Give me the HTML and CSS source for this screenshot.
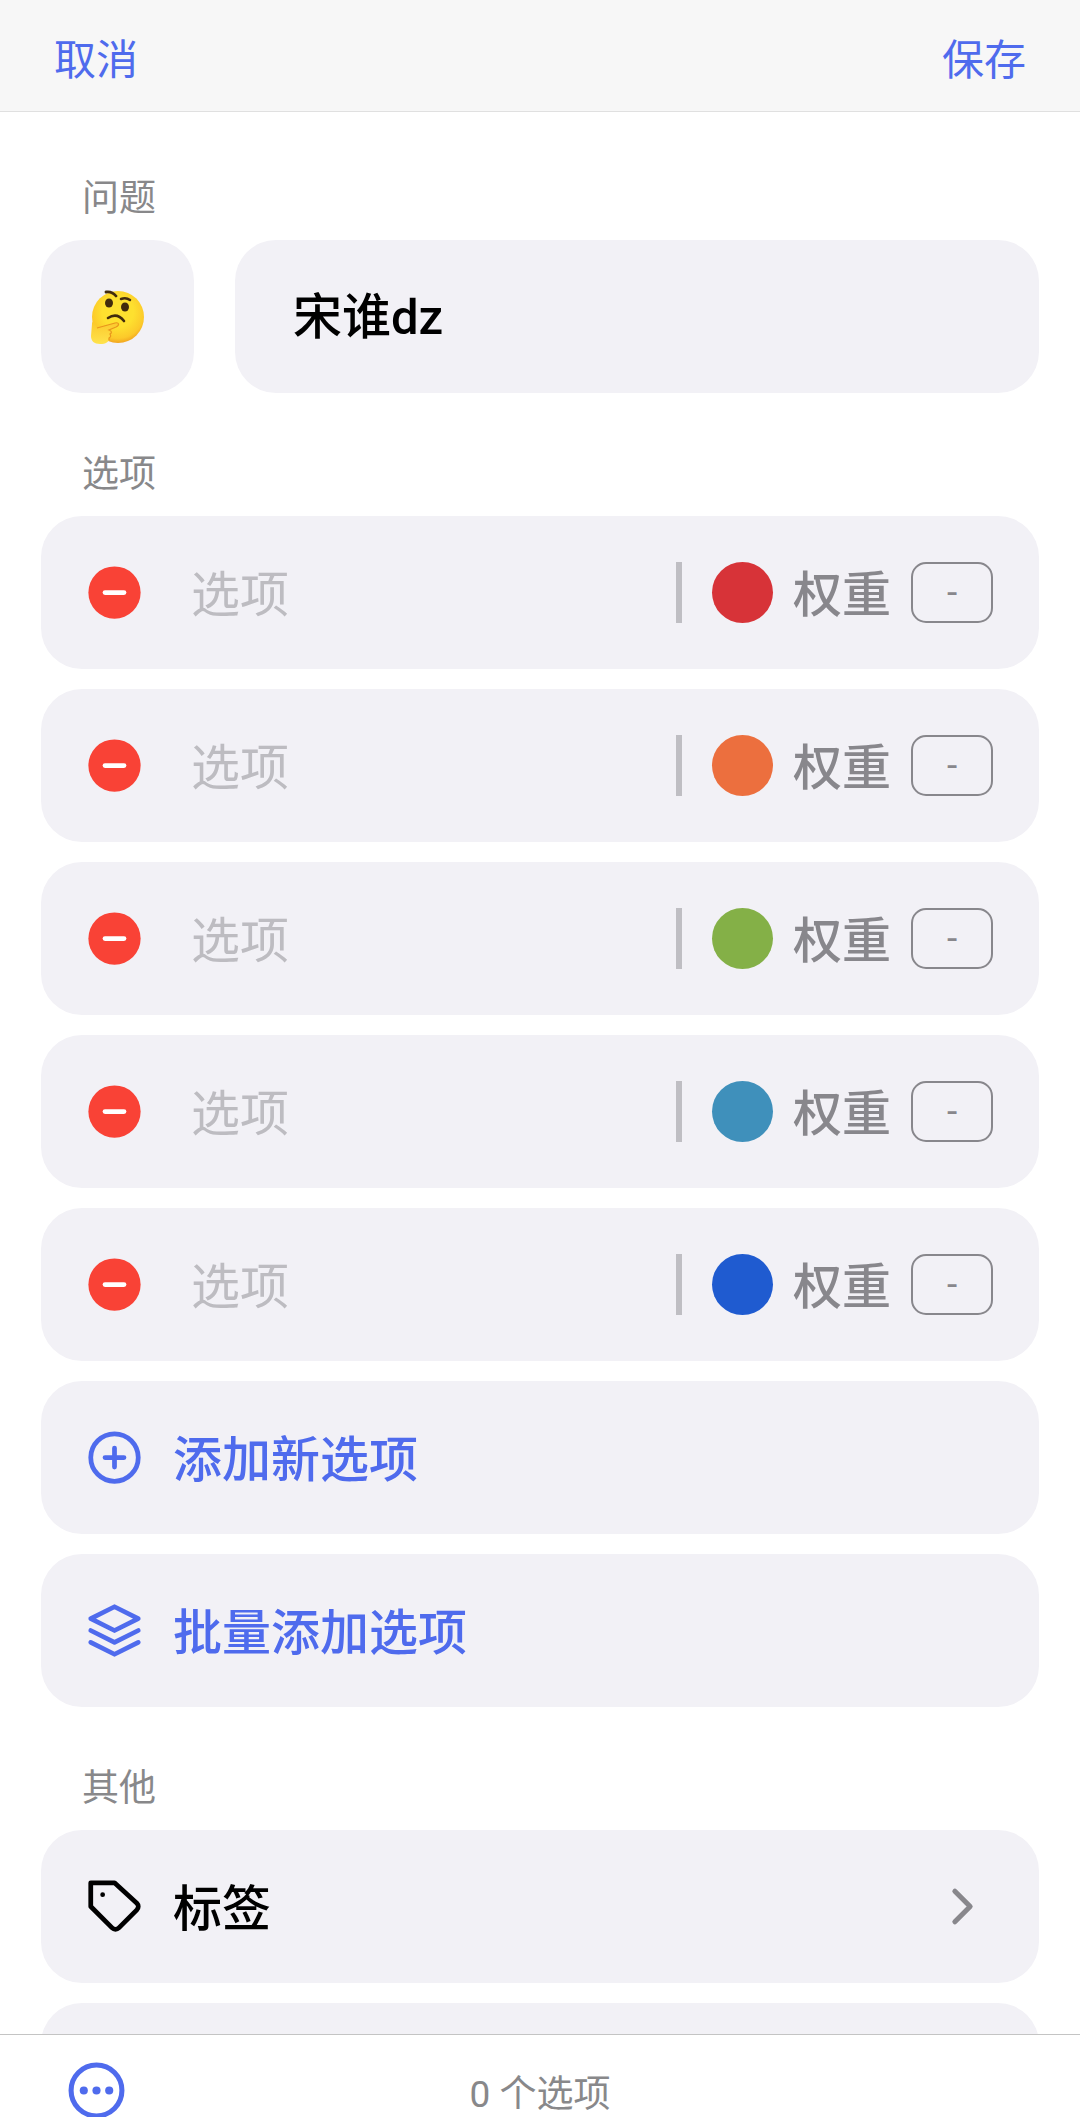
FILE: index.html
```
<!DOCTYPE html>
<html lang="zh-CN">
<head>
    <meta charset="UTF-8">
    <meta name="viewport" content="width=device-width, initial-scale=1.0">
    <title>编辑问题</title>
    <link rel="stylesheet" href="styles.css">
</head>
<body>

    <header class="top-bar">
        <button type="button" class="link-button">取消</button>
        <button type="button" class="link-button">保存</button>
    </header>

    <main class="content">
        <label class="section-title" for="question">问题</label>
        <div class="question">
            <button type="button" class="card emoji-button" aria-label="选择表情">
                <svg class="emoji" viewBox="0 0 54 54" aria-hidden="true">
                    <defs>
                        <radialGradient id="face" cx="50%" cy="40%" r="60%">
                            <stop offset="0.5" stop-color="#fee02f"/>
                            <stop offset="0.85" stop-color="#fcc92a"/>
                            <stop offset="1" stop-color="#f2a51f"/>
                        </radialGradient>
                        <linearGradient id="hand" x1="0" y1="0" x2="0" y2="1">
                            <stop offset="0" stop-color="#fbc92c"/>
                            <stop offset="1" stop-color="#ffe34d"/>
                        </linearGradient>
                    </defs>
                    <circle cx="27" cy="27" r="26" fill="url(#face)"/>
                    <ellipse cx="18" cy="13" rx="4" ry="4.500" fill="#422b0d"/>
                    <ellipse cx="34" cy="17" rx="4" ry="4.500" fill="#422b0d"/>
                    <path d="M15 2q6-1 10 4" fill="none" stroke="#422b0d" stroke-width="2.800" stroke-linecap="round"/>
                    <path d="M30 9q5-2 9 1" fill="none" stroke="#422b0d" stroke-width="2.500" stroke-linecap="round"/>
                    <path d="M17 28q9-6 16 3" fill="none" stroke="#422b0d" stroke-width="2.600" stroke-linecap="round"/>
                    <path d="M1 34c0-3 2-2 3 0l2 4 18-5c4-1 5 2 1 4l-7 3c3 1 3 3 1 4 1 2 1 3-1 4 0 4-3 6-9 6C3 54 0 51 0 46z" fill="url(#hand)"/>
                    <path d="M6 38l18-5c4-1 5 2 1 4l-7 3c3 1 3 3 1 4 1 2 1 3-1 4v2" fill="none" stroke="#e9961c" stroke-width="1.200"/>
                </svg>
            </button>
            <input type="text" id="question" class="card question-input" value="宋谁dz">
        </div>

        <h2 class="section-title">选项</h2>
        <div class="card-list">
            <div class="card row">
                <button type="button" class="icon-button" aria-label="删除选项">
                    <svg class="icon" viewBox="0 0 24 24"><circle class="remove-disc" cx="12" cy="12" r="11"/><path class="remove-line" d="M8 12h8"/></svg>
                </button>
                <input type="text" class="option-input" placeholder="选项" aria-label="选项 1">
                <span class="divider"></span>
                <button type="button" class="swatch swatch-red" aria-label="颜色"></button>
                <label class="weight-label" for="weight-1">权重</label>
                <input type="text" id="weight-1" class="weight-input" value="-">
            </div>
            <div class="card row">
                <button type="button" class="icon-button" aria-label="删除选项">
                    <svg class="icon" viewBox="0 0 24 24"><circle class="remove-disc" cx="12" cy="12" r="11"/><path class="remove-line" d="M8 12h8"/></svg>
                </button>
                <input type="text" class="option-input" placeholder="选项" aria-label="选项 2">
                <span class="divider"></span>
                <button type="button" class="swatch swatch-orange" aria-label="颜色"></button>
                <label class="weight-label" for="weight-2">权重</label>
                <input type="text" id="weight-2" class="weight-input" value="-">
            </div>
            <div class="card row">
                <button type="button" class="icon-button" aria-label="删除选项">
                    <svg class="icon" viewBox="0 0 24 24"><circle class="remove-disc" cx="12" cy="12" r="11"/><path class="remove-line" d="M8 12h8"/></svg>
                </button>
                <input type="text" class="option-input" placeholder="选项" aria-label="选项 3">
                <span class="divider"></span>
                <button type="button" class="swatch swatch-green" aria-label="颜色"></button>
                <label class="weight-label" for="weight-3">权重</label>
                <input type="text" id="weight-3" class="weight-input" value="-">
            </div>
            <div class="card row">
                <button type="button" class="icon-button" aria-label="删除选项">
                    <svg class="icon" viewBox="0 0 24 24"><circle class="remove-disc" cx="12" cy="12" r="11"/><path class="remove-line" d="M8 12h8"/></svg>
                </button>
                <input type="text" class="option-input" placeholder="选项" aria-label="选项 4">
                <span class="divider"></span>
                <button type="button" class="swatch swatch-sky" aria-label="颜色"></button>
                <label class="weight-label" for="weight-4">权重</label>
                <input type="text" id="weight-4" class="weight-input" value="-">
            </div>
            <div class="card row">
                <button type="button" class="icon-button" aria-label="删除选项">
                    <svg class="icon" viewBox="0 0 24 24"><circle class="remove-disc" cx="12" cy="12" r="11"/><path class="remove-line" d="M8 12h8"/></svg>
                </button>
                <input type="text" class="option-input" placeholder="选项" aria-label="选项 5">
                <span class="divider"></span>
                <button type="button" class="swatch swatch-blue" aria-label="颜色"></button>
                <label class="weight-label" for="weight-5">权重</label>
                <input type="text" id="weight-5" class="weight-input" value="-">
            </div>
            <button type="button" class="card row action">
                <svg class="icon" viewBox="0 0 24 24"><circle cx="12" cy="12" r="10"/><path d="M12 8v8M8 12h8"/></svg>
                <span class="row-text">添加新选项</span>
            </button>
            <button type="button" class="card row action">
                <svg class="icon" viewBox="0 0 24 24"><path d="M12 2L2 7l10 5 10-5-10-5zM2 17l10 5 10-5M2 12l10 5 10-5"/></svg>
                <span class="row-text">批量添加选项</span>
            </button>
        </div>

        <h2 class="section-title">其他</h2>
        <div class="card-list">
            <button type="button" class="card row">
                <svg class="icon" viewBox="0 0 24 24"><path d="M21.420 13.410l-7.590 7.590a2 2 0 0 1-2.830 0L2 12V2h10l9.420 8.590a2 2 0 0 1 0 2.820zM7 7h.010"/></svg>
                <span class="row-text">标签</span>
                <svg class="icon icon-large chevron" viewBox="0 0 24 24"><path d="M9 18l6-6-6-6"/></svg>
            </button>
            <div class="card row"></div>
        </div>
    </main>

    <footer class="bottom-bar">
        <button type="button" class="icon-button action" aria-label="更多">
            <svg class="icon icon-large" viewBox="0 0 24 24"><circle cx="12" cy="12" r="10"/><g class="dots"><circle cx="7" cy="12" r="1.600"/><circle cx="12" cy="12" r="1.600"/><circle cx="17" cy="12" r="1.600"/></g></svg>
        </button>
        <span class="count">0 个选项</span>
    </footer>

</body>
</html>
```
FILE: styles.css
```
*,
::after,
::before {
    margin: 0;
    padding: 0;
    box-sizing: border-box;
}

body {
    display: flex;
    flex-direction: column;
    height: 100vh;
    overflow: hidden;
    background-color: #fff;
    color: #000;
    font-family: Roboto, "Noto Sans CJK SC", sans-serif;
    font-size: 49px;
}

button,
input {
    border: none;
    background: none;
    color: inherit;
    font: inherit;
}

button {
    cursor: pointer;
}

input {
    min-width: 0;
    outline: none;
}

.top-bar {
    display: flex;
    flex: none;
    justify-content: space-between;
    align-items: center;
    padding: 30px 54px 20px;
    background-color: #f7f7f7;
    border-bottom: 1px solid #e0e0e0;
}

.link-button {
    color: #4f6bed;
    font-size: 42px;
    line-height: 61px;
}

.content {
    flex: 1;
    min-height: 0;
    overflow: hidden;
    padding: 5px 41px 0;
}

.section-title {
    display: block;
    padding: 55px 41px 14px;
    color: #88888a;
    font-size: 37px;
    font-weight: 400;
    line-height: 54px;
}

.question {
    display: flex;
    gap: 41px;
}

.card {
    height: 153px;
    border-radius: 41px;
    background-color: #f2f1f6;
}

.emoji-button {
    display: flex;
    flex: none;
    justify-content: center;
    align-items: center;
    width: 153px;
}

.emoji {
    width: 54px;
    height: 54px;
}

.question-input {
    flex: 1;
    padding: 0 58px 8px;
    font-weight: 500;
}

.card-list {
    display: flex;
    flex-direction: column;
    gap: 20px;
}

.row {
    display: flex;
    flex: none;
    align-items: center;
    width: 100%;
    padding: 0 46px 0 45px;
    text-align: left;
}

.row-text {
    margin-left: 30px;
    padding-bottom: 4px;
    font-weight: 500;
}

.icon-button {
    display: flex;
    flex: none;
}

.icon {
    flex: none;
    width: 57px;
    height: 57px;
    fill: none;
    stroke: currentColor;
    stroke-width: 2;
    stroke-linecap: round;
    stroke-linejoin: round;
}

.icon-large {
    width: 61px;
    height: 61px;
}

.remove-disc {
    fill: #f94236;
    stroke: none;
}

.remove-line {
    stroke: #fff;
}

.dots {
    fill: currentColor;
    stroke: none;
}

.action {
    color: #4f6bed;
}

.chevron {
    margin-left: auto;
    color: #88878c;
}

.option-input {
    flex: 1;
    margin-left: 48px;
    padding-top: 6px;
}

.option-input::placeholder {
    color: #bdbcc1;
}

.divider {
    flex: none;
    width: 6px;
    height: 61px;
    margin-right: 30px;
    background-color: #bfbec3;
}

.swatch {
    flex: none;
    width: 61px;
    height: 61px;
    border-radius: 50%;
}

.swatch-red {
    background-color: #d73338;
}

.swatch-orange {
    background-color: #ec6f3e;
}

.swatch-green {
    background-color: #84b047;
}

.swatch-sky {
    background-color: #3f90bb;
}

.swatch-blue {
    background-color: #1f5bd0;
}

.weight-label {
    margin: 0 20px;
    padding-bottom: 4px;
    color: #88878c;
    font-weight: 500;
}

.weight-input {
    width: 82px;
    height: 61px;
    border: 2px solid #88878c;
    border-radius: 15px;
    color: #88878c;
    font-size: 37px;
    text-align: center;
}

/* three columns keep the count centred */
.bottom-bar {
    display: grid;
    flex: none;
    grid-template-columns: 1fr auto 1fr;
    align-items: center;
    height: 83px;
    padding: 25px 66px 0;
    border-top: 1px solid #c4c4c4;
    background-color: #fff;
}

.count {
    color: #88888a;
    font-size: 37px;
    font-weight: 400;
}
```
